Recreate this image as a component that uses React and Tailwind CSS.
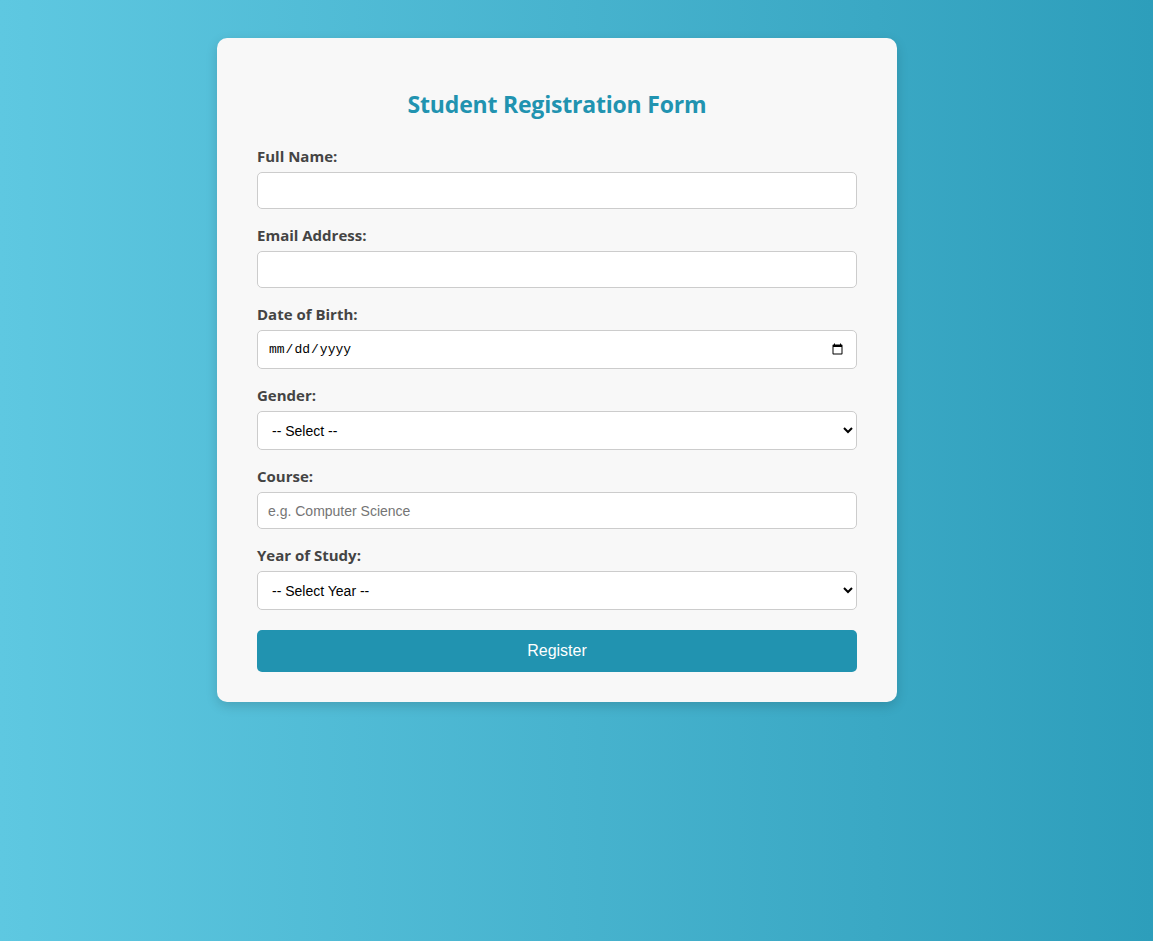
export default function App() {
  const label = 'block h-5 mb-[5px] text-[15px] leading-[18px] font-bold text-[#444]';
  const field =
    'block w-full h-[37px] px-[10px] bg-white border border-[#ccc] rounded-[5px] text-[14px] text-black outline-none placeholder:text-[#757575]';
  const font = { fontFamily: '"Liberation Sans", Arial, sans-serif' };

  return (
    <div className="min-h-[941px] w-full bg-gradient-to-r from-[#5ec8e1] to-[#2d9ebb] pt-[38px] pl-[217px]">
      <div
        className="w-[680px] rounded-[10px] bg-[#f8f8f8] px-10 pt-[30px] pb-[30px] shadow-[0_4px_12px_rgba(0,0,0,0.15)]"
        style={{ fontFamily: '"Open Sans", "Noto Sans", sans-serif' }}
      >
        <h2 className="mt-5 mb-[27px] text-center text-[23px] leading-8 font-bold text-[#2193b0] tracking-[-0.2px]">
          Student Registration Form
        </h2>

        <form className="flex flex-col gap-[17px]" onSubmit={(e) => e.preventDefault()}>
          <div>
            <label className={label}>Full Name:</label>
            <input type="text" className={field} style={font} />
          </div>
          <div>
            <label className={label}>Email Address:</label>
            <input type="email" className={field} style={font} />
          </div>
          <div>
            <label className={label}>Date of Birth:</label>
            <input
              type="date"
              className="block w-full h-[39px] px-[10px] bg-white border border-[#ccc] rounded-[5px] text-[13px] text-black outline-none"
              style={{ fontFamily: '"Liberation Mono", monospace' }}
            />
          </div>
          <div>
            <label className={label}>Gender:</label>
            <select
              className="block w-full h-[39px] px-[10px] bg-white border border-[#ccc] rounded-[5px] text-[14px] text-black outline-none"
              style={font}
              defaultValue=""
            >
              <option value="">-- Select --</option>
              <option>Male</option>
              <option>Female</option>
              <option>Other</option>
            </select>
          </div>
          <div>
            <label className={label}>Course:</label>
            <input type="text" placeholder="e.g. Computer Science" className={field} style={font} />
          </div>
          <div>
            <label className={label}>Year of Study:</label>
            <select
              className="block w-full h-[39px] px-[10px] bg-white border border-[#ccc] rounded-[5px] text-[14px] text-black outline-none"
              style={font}
              defaultValue=""
            >
              <option value="">-- Select Year --</option>
              <option>1st Year</option>
              <option>2nd Year</option>
              <option>3rd Year</option>
              <option>4th Year</option>
            </select>
          </div>
          <button
            type="submit"
            className="mt-[3px] h-[42px] w-full rounded-[5px] bg-[#2193b0] text-[16px] text-white"
            style={font}
          >
            Register
          </button>
        </form>
      </div>
    </div>
  );
}
